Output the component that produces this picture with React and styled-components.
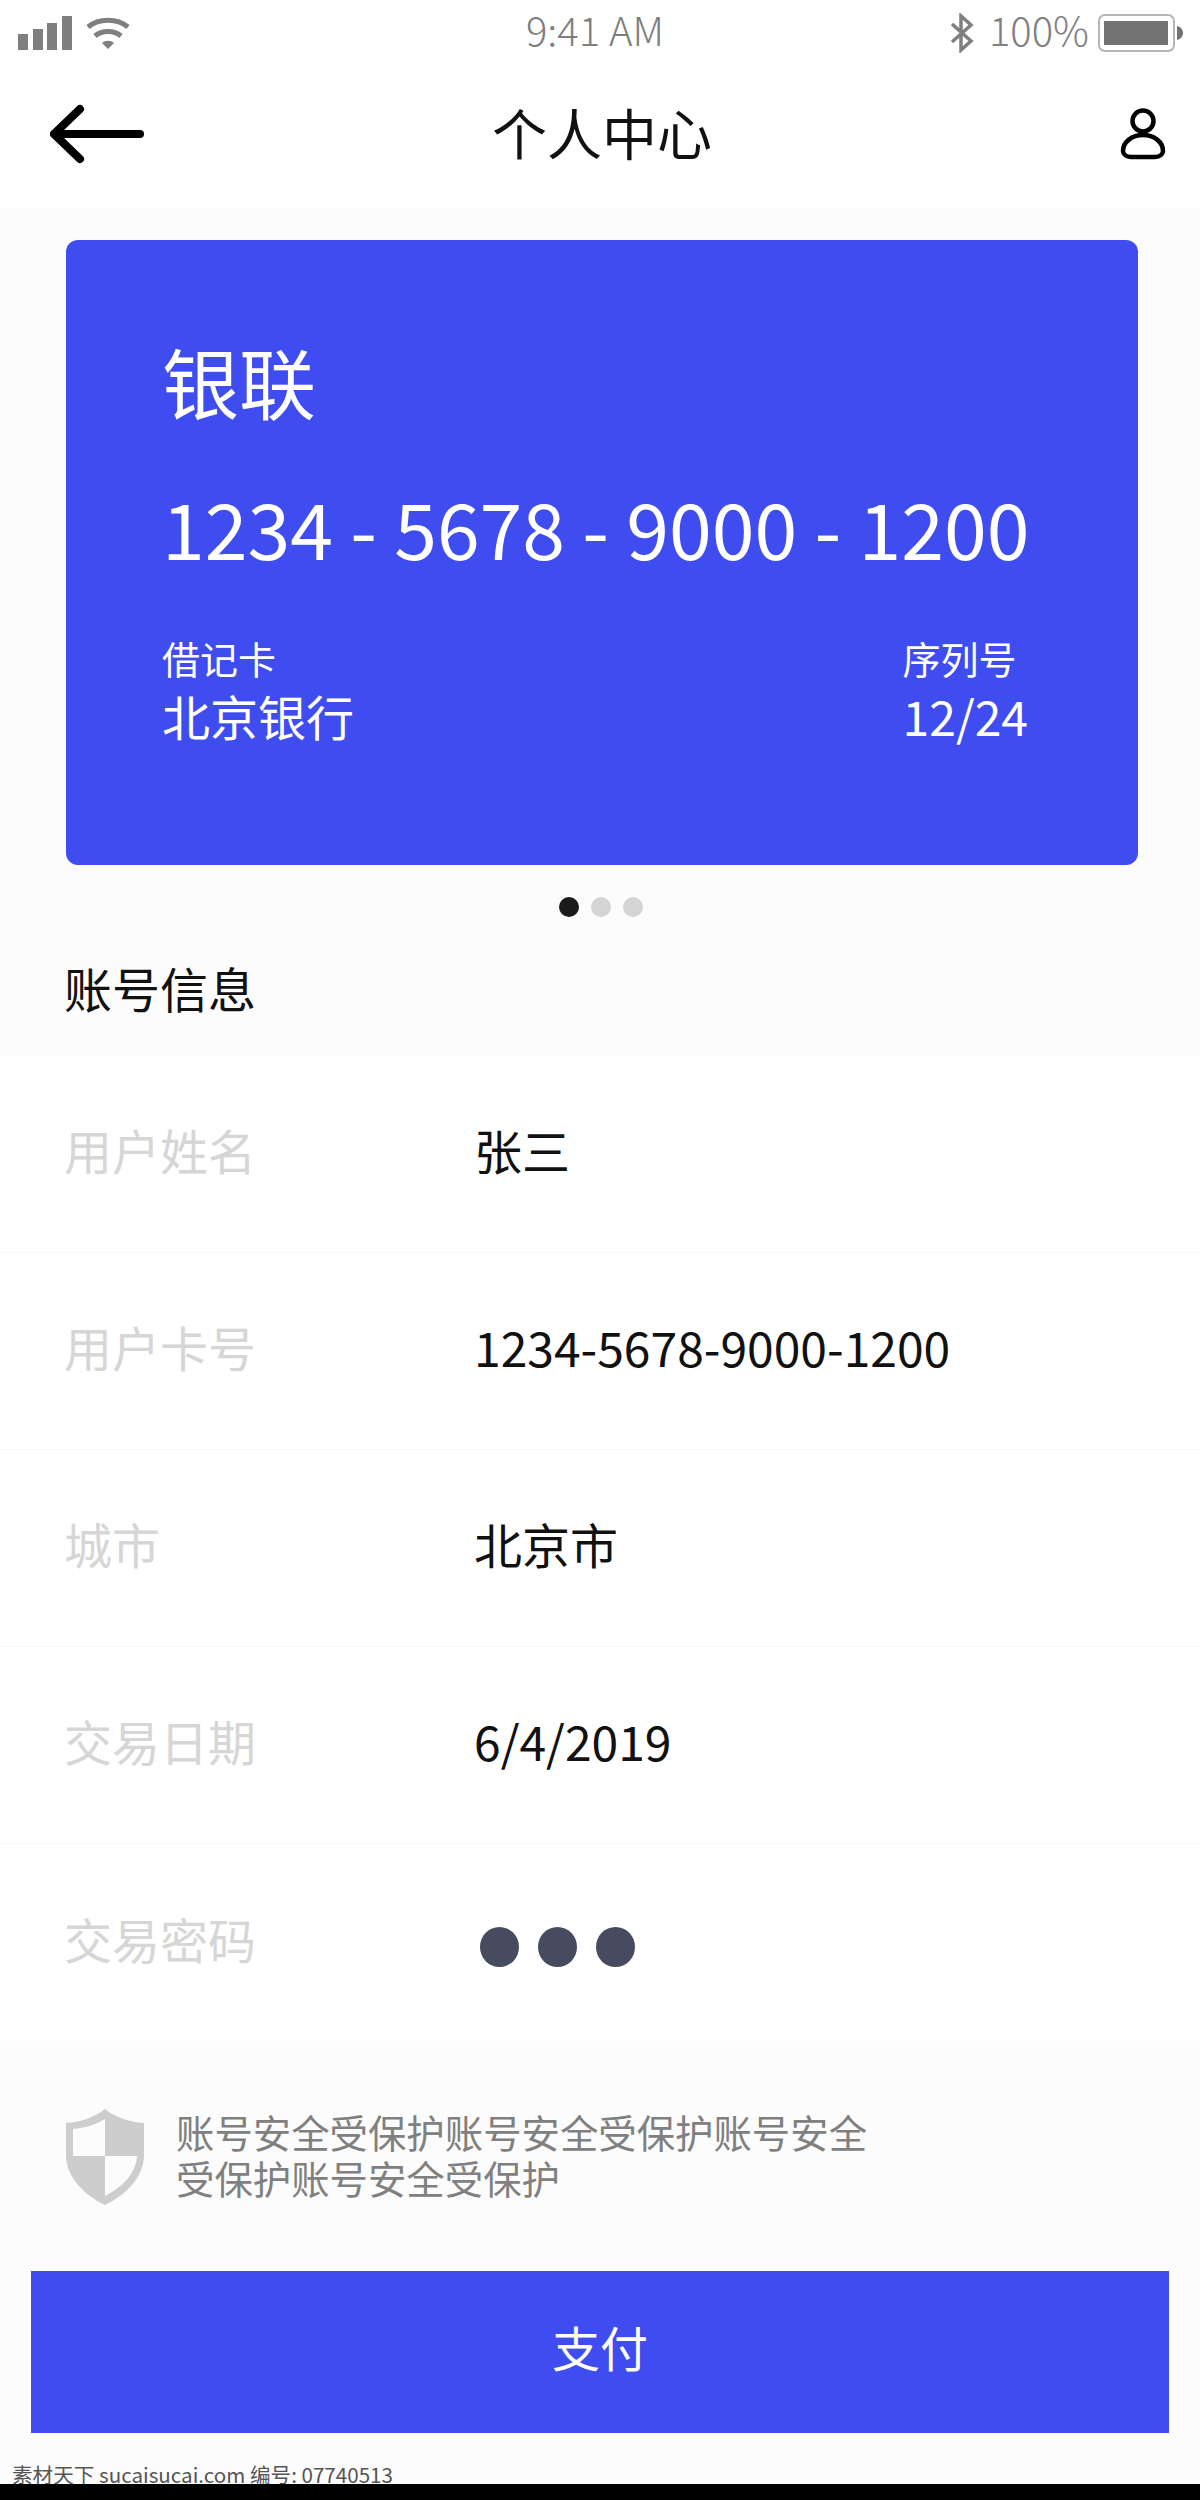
import React from 'react';
import styled, { createGlobalStyle } from 'styled-components';

const GlobalStyle = createGlobalStyle`
  html, body {
    margin: 0;
    padding: 0;
    background: #fcfcfc;
  }
  * {
    box-sizing: border-box;
  }
`;

const Page = styled.div`
  width: 1200px;
  height: 2500px;
  display: flex;
  flex-direction: column;
  overflow: hidden;
  background: #fcfcfc;
  font-family: 'Noto Sans CJK SC', 'Noto Sans', sans-serif;
  color: #111;
`;

const StatusBar = styled.div`
  height: 66px;
  flex: none;
  display: grid;
  grid-template-columns: 1fr auto 1fr;
  align-items: center;
  padding: 0 16px 0 18px;
  background: #fff;
  color: #7f7f7f;
  font-size: 40px;
  font-weight: 300;
`;

const StatusLeft = styled.div`
  display: flex;
  align-items: center;
  gap: 14px;
`;

const StatusRight = styled.div`
  display: flex;
  align-items: center;
  justify-content: flex-end;
  gap: 20px;
`;

const StatusTime = styled.span`
  margin: 0 12px 8px 0;
`;

const Percent = styled.span`
  margin: 0 -11px 8px -5px;
`;

const NavBar = styled.header`
  height: 141px;
  flex: none;
  display: grid;
  grid-template-columns: 1fr auto 1fr;
  align-items: center;
  padding: 0 34px 6px 50px;
  background: #fff;
`;

const NavTitle = styled.h1`
  margin: 0 12px 6px 0;
  font-size: 55px;
  font-weight: 400;
  color: #111;
`;

const NavEnd = styled.div`
  display: flex;
  justify-content: flex-end;
`;

const Card = styled.section`
  flex: none;
  height: 625px;
  margin: 33px 62px 0 66px;
  padding: 86px 110px 0 96px;
  background: #3f4cf0;
  border-radius: 12px;
  color: #fff;
`;

const Brand = styled.div`
  font-size: 77px;
  line-height: 110px;
`;

const CardNumber = styled.div`
  margin-top: 35px;
  font-size: 77px;
  line-height: 112px;
  white-space: nowrap;
`;

const CardMeta = styled.div`
  margin-top: 50px;
  display: flex;
  justify-content: space-between;
`;

const MetaGroup = styled.div`
  display: flex;
  flex-direction: column;
  align-items: flex-start;
`;

const MetaLabel = styled.div`
  font-size: 38px;
  line-height: 50px;
`;

const MetaValue = styled.div`
  font-size: 48px;
  line-height: 64px;
`;

const Dots = styled.div`
  flex: none;
  margin-top: 32px;
  padding-left: 2px;
  display: flex;
  justify-content: center;
  gap: 12px;
`;

const Dot = styled.span`
  width: 20px;
  height: 20px;
  border-radius: 50%;
  background: ${({ $active }) => ($active ? '#1a1a1a' : '#d4d4d4')};
`;

const SectionTitle = styled.h2`
  flex: none;
  height: 139px;
  margin: 0;
  padding: 1px 64px 0;
  display: flex;
  align-items: center;
  font-size: 48px;
  font-weight: 400;
  color: #111;
`;

const InfoList = styled.div`
  flex: none;
  background: #fff;
`;

const InfoRow = styled.div`
  height: 197px;
  display: grid;
  grid-template-columns: 410px 1fr;
  align-items: center;
  padding: 0 64px 10px;
  border-bottom: 1px solid #f8f8f8;
  font-size: 48px;

  &:last-child {
    border-bottom: 0;
  }
`;

const InfoLabel = styled.div`
  color: #d6d6d6;
`;

const InfoValue = styled.div`
  color: #111;
`;

const PasswordDots = styled.div`
  display: flex;
  gap: 19px;
  padding: 19px 0 0 6px;
`;

const PasswordDot = styled.span`
  width: 39px;
  height: 40px;
  border-radius: 50%;
  background: #464b5f;
`;

const Notice = styled.div`
  flex: none;
  height: 96px;
  margin-top: 68px;
  padding: 0 66px;
  display: flex;
  align-items: center;
  gap: 32px;
`;

const NoticeText = styled.p`
  margin: 0 0 6px;
  width: 700px;
  font-size: 38.4px;
  line-height: 46px;
  color: #808080;
`;

const PayButton = styled.button`
  flex: none;
  height: 162px;
  margin: 66px 31px 0;
  padding: 0 0 12px;
  border: 0;
  background: #3f4cf0;
  color: #fff;
  font-family: inherit;
  font-size: 48px;
`;

const Watermark = styled.div`
  flex: none;
  margin-top: 32px;
  padding-left: 12px;
  height: 19px;
  font-size: 20.6px;
  line-height: 19px;
  color: #555;
  white-space: nowrap;
  background: #fcfcfc;
`;

const BlackBar = styled.div`
  flex: 1;
  background: #000;
`;

const SignalIcon = () => (
  <svg width="54" height="34" viewBox="0 0 54 34" fill="#7f7f7f">
    <rect x="0" y="18" width="10" height="16" />
    <rect x="15" y="13" width="10" height="21" />
    <rect x="29" y="7" width="10" height="27" />
    <rect x="44" y="0" width="10" height="34" />
  </svg>
);

const WifiIcon = () => (
  <svg width="44" height="32" viewBox="0 0 44 32" fill="none" stroke="#7f7f7f" strokeWidth="5">
    <path d="M2 10 C13 1 31 1 42 10" />
    <path d="M9 19 C16 13 28 13 35 19" />
    <path d="M16 26 L22 32 L28 26 C25 23 19 23 16 26Z" fill="#7f7f7f" stroke="none" />
  </svg>
);

const BluetoothIcon = () => (
  <svg width="24" height="40" viewBox="0 0 24 40" fill="none" stroke="#7f7f7f" strokeWidth="3.5">
    <path d="M2 11 L21 28 L11 37 L11 3 L21 12 L2 29" />
  </svg>
);

const BatteryIcon = () => (
  <svg width="86" height="38" viewBox="0 0 86 38">
    <rect x="1" y="1" width="75" height="36" rx="6" fill="none" stroke="#b5b5b5" strokeWidth="2" />
    <rect x="6" y="7" width="64" height="24" fill="#737373" />
    <path d="M79 12 C83 13 85 16 85 19 C85 22 83 25 79 26Z" fill="#737373" />
  </svg>
);

const BackArrow = () => (
  <svg width="94" height="60" viewBox="0 0 94 60" fill="none" stroke="#000" strokeWidth="8" strokeLinecap="round" strokeLinejoin="round">
    <path d="M90 30 L4 30 M30 5 L4 30 L30 55" />
  </svg>
);

const PersonIcon = () => (
  <svg width="46" height="52" viewBox="0 0 46 52" fill="none" stroke="#000" strokeWidth="4.5" strokeLinejoin="round">
    <circle cx="23" cy="13" r="10.5" />
    <path d="M11 49 L35 49 C40 49 43 46 43 43 C43 34 34 27 23 27 C12 27 3 34 3 43 C3 46 6 49 11 49Z" />
  </svg>
);

const ShieldIcon = () => (
  <svg width="78" height="96" viewBox="0 0 78 96">
    <path d="M39 0 C50 9 64 13 78 14 L78 46 C78 68 60 86 39 96 C18 86 0 68 0 46 L0 14 C14 13 28 9 39 0Z" fill="#cdcdcd" />
    <path d="M39 10 L39 47 L7 47 L7 20 C19 19 29 16 39 10Z" fill="#fcfcfc" />
    <path d="M39 47 L71 47 C70 65 56 78 39 87Z" fill="#fcfcfc" />
  </svg>
);

const rows = [
  { label: '用户姓名', value: '张三' },
  { label: '用户卡号', value: '1234-5678-9000-1200' },
  { label: '城市', value: '北京市' },
  { label: '交易日期', value: '6/4/2019' },
];

const App = () => (
  <Page>
    <GlobalStyle />
    <StatusBar>
      <StatusLeft>
        <SignalIcon />
        <WifiIcon />
      </StatusLeft>
      <StatusTime>9:41 AM</StatusTime>
      <StatusRight>
        <BluetoothIcon />
        <Percent>100%</Percent>
        <BatteryIcon />
      </StatusRight>
    </StatusBar>
    <NavBar>
      <BackArrow />
      <NavTitle>个人中心</NavTitle>
      <NavEnd>
        <PersonIcon />
      </NavEnd>
    </NavBar>
    <Card>
      <Brand>银联</Brand>
      <CardNumber>1234 - 5678 - 9000 - 1200</CardNumber>
      <CardMeta>
        <MetaGroup>
          <MetaLabel>借记卡</MetaLabel>
          <MetaValue>北京银行</MetaValue>
        </MetaGroup>
        <MetaGroup>
          <MetaLabel>序列号</MetaLabel>
          <MetaValue>12/24</MetaValue>
        </MetaGroup>
      </CardMeta>
    </Card>
    <Dots>
      <Dot $active />
      <Dot />
      <Dot />
    </Dots>
    <SectionTitle>账号信息</SectionTitle>
    <InfoList>
      {rows.map((row) => (
        <InfoRow key={row.label}>
          <InfoLabel>{row.label}</InfoLabel>
          <InfoValue>{row.value}</InfoValue>
        </InfoRow>
      ))}
      <InfoRow>
        <InfoLabel>交易密码</InfoLabel>
        <PasswordDots>
          <PasswordDot />
          <PasswordDot />
          <PasswordDot />
        </PasswordDots>
      </InfoRow>
    </InfoList>
    <Notice>
      <ShieldIcon />
      <NoticeText>账号安全受保护账号安全受保护账号安全受保护账号安全受保护</NoticeText>
    </Notice>
    <PayButton>支付</PayButton>
    <Watermark>素材天下 sucaisucai.com 编号: 07740513</Watermark>
    <BlackBar />
  </Page>
);

export default App;
